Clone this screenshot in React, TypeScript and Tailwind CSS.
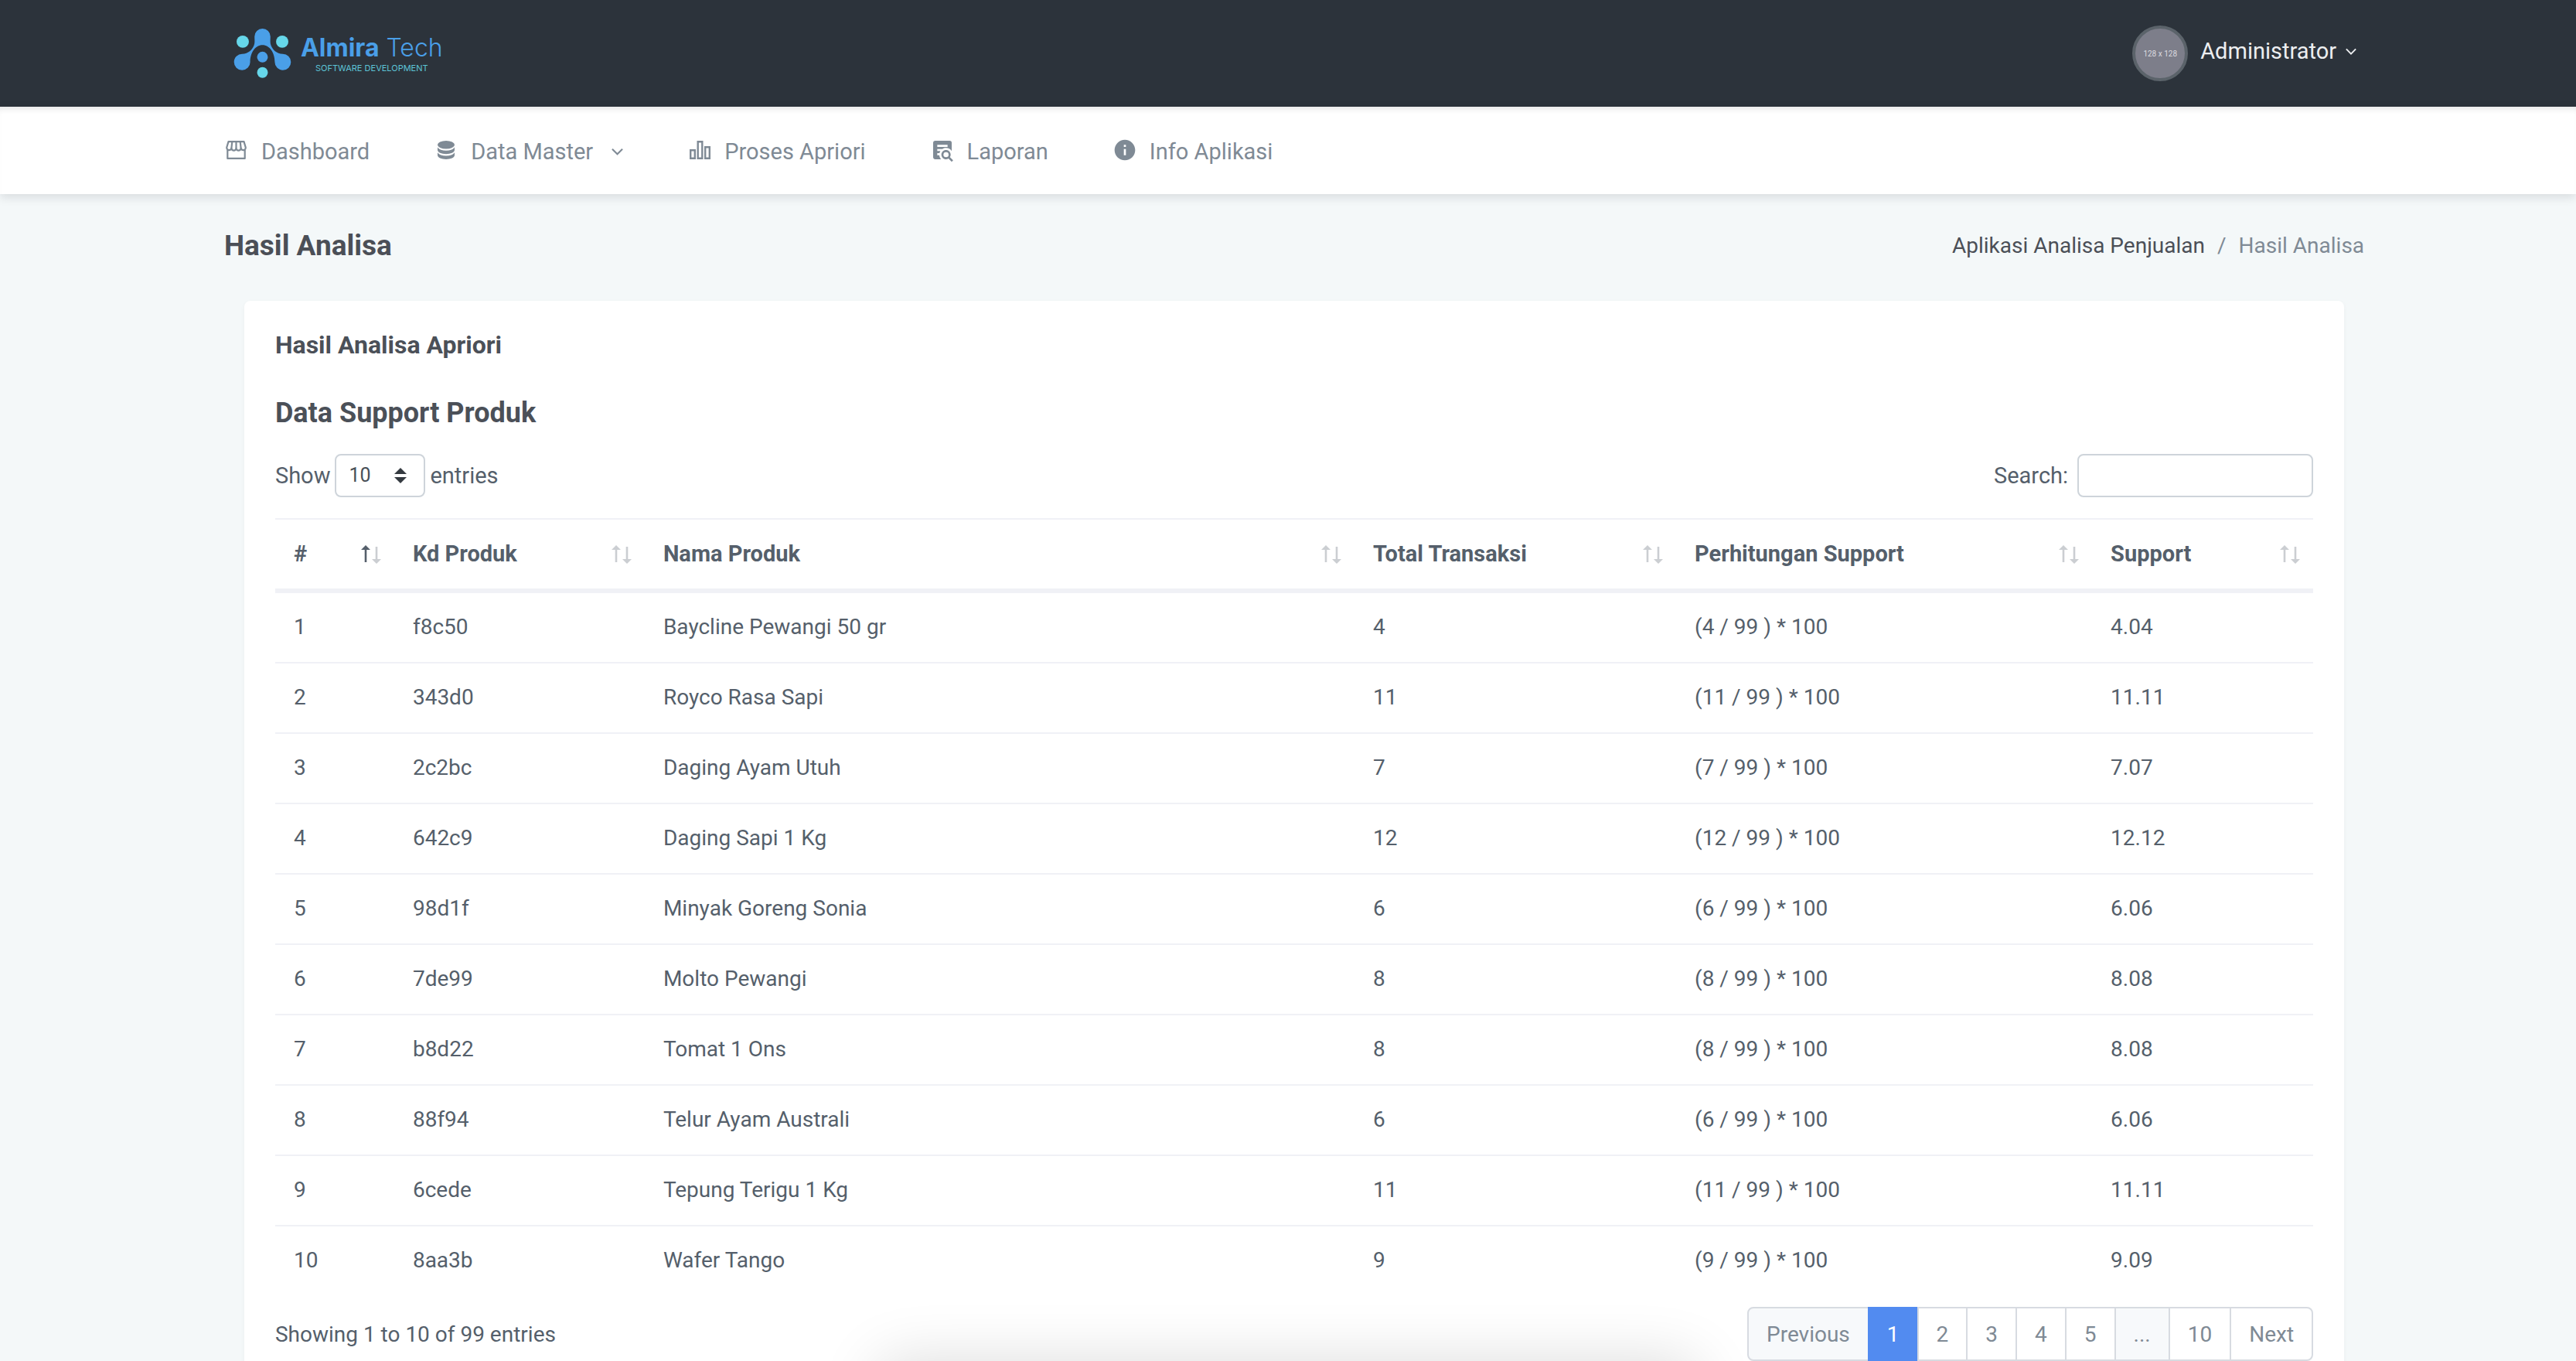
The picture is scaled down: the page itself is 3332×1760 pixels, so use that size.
import { BiSolidInfoCircle } from 'react-icons/bi'

const products = [
  { id: 1, code: 'f8c50', name: 'Baycline Pewangi 50 gr', total: 4, support: '4.04' },
  { id: 2, code: '343d0', name: 'Royco Rasa Sapi', total: 11, support: '11.11' },
  { id: 3, code: '2c2bc', name: 'Daging Ayam Utuh', total: 7, support: '7.07' },
  { id: 4, code: '642c9', name: 'Daging Sapi 1 Kg', total: 12, support: '12.12' },
  { id: 5, code: '98d1f', name: 'Minyak Goreng Sonia', total: 6, support: '6.06' },
  { id: 6, code: '7de99', name: 'Molto Pewangi', total: 8, support: '8.08' },
  { id: 7, code: 'b8d22', name: 'Tomat 1 Ons', total: 8, support: '8.08' },
  { id: 8, code: '88f94', name: 'Telur Ayam Australi', total: 6, support: '6.06' },
  { id: 9, code: '6cede', name: 'Tepung Terigu 1 Kg', total: 11, support: '11.11' },
  { id: 10, code: '8aa3b', name: 'Wafer Tango', total: 9, support: '9.09' },
]

const columns = [
  { label: '#', width: 'w-[154px]', sorted: true },
  { label: 'Kd Produk', width: 'w-[324px]' },
  { label: 'Nama Produk', width: '' },
  { label: 'Total Transaksi', width: 'w-[416px]' },
  { label: 'Perhitungan Support', width: 'w-[538px]' },
  { label: 'Support', width: 'w-[286px]' },
]

const pages = ['Previous', '1', '2', '3', '4', '5', '...', '10', 'Next']

function Logo() {
  return (
    <a href="#" className="flex items-center gap-3">
      <svg viewBox="98 113 224 193" className="h-16 w-[75px]" aria-hidden="true">
        <g fill="#4a9fe8">
          <path d="M179 144a31 31 0 0 1 62 0c0 12-2 24 2 34 6 16 22 34 46 34a31.500 31.500 0 1 1-31 31c0-36-20-66-48-66s-48 30-48 66a31.500 31.500 0 1 1-31-31c24 0 40-18 46-34 4-10 2-22 2-34z" />
          <circle cx="210" cy="224" r="21" />
        </g>
        <g fill="#66d7ea">
          <circle cx="133" cy="164" r="24" />
          <circle cx="287" cy="164" r="24" />
          <circle cx="210" cy="284" r="21" />
        </g>
      </svg>
      <span className="flex flex-col items-center pt-[2px]">
        <span className="font-['Inter',sans-serif] text-[32px] leading-9 text-[#4a9fe8]">
          <b className="font-bold">Almira</b> <span className="font-light">Tech</span>
        </span>
        <span className="font-['Inter',sans-serif] text-[11px] leading-4 text-[#5cc4d6]">
          SOFTWARE DEVELOPMENT
        </span>
      </span>
    </a>
  )
}

function Chevron({ className }: { className: string }) {
  return (
    <svg viewBox="0 0 16 10" className={className} fill="none" stroke="currentColor" aria-hidden="true">
      <path d="M1 1.5 8 8.5 15 1.5" strokeWidth="2.2" />
    </svg>
  )
}

function StoreIcon() {
  return (
    <svg viewBox="0 0 27 24" className="h-6 w-[27px]" fill="none" stroke="currentColor" strokeWidth="2.2" strokeLinejoin="round" aria-hidden="true">
      <path d="M3.500 1.100h20l2.200 7.400a3.050 3.050 0 0 1-6.100 1 3.050 3.050 0 0 1-6.100 0 3.050 3.050 0 0 1-6.100 0 3.050 3.050 0 0 1-6.100-1z" />
      <path d="M8.300 1.100 7.400 9.500M13.500 1.100v8.400M18.700 1.100l.9 8.400M2.300 12v10.900h22.400V12" />
    </svg>
  )
}

function DataIcon() {
  return (
    <svg viewBox="0 0 22 24" className="h-6 w-[22px]" fill="currentColor" aria-hidden="true">
      <ellipse cx="11" cy="5.200" rx="11" ry="5.200" />
      <path d="M0 8.400c2 3 6 4.300 11 4.300s9-1.300 11-4.300v3.600c0 3-5 5.200-11 5.200S0 15 0 12z" />
      <path d="M0 15.200c2 3 6 4.300 11 4.300s9-1.300 11-4.300v3.600c0 3-5 5.200-11 5.200S0 21.800 0 18.800z" />
    </svg>
  )
}

function BarsIcon() {
  return (
    <svg viewBox="0 0 27 24" className="h-6 w-[27px]" fill="none" stroke="currentColor" strokeWidth="2.4" aria-hidden="true">
      <path d="M1.200 12.200h5.600v10.600H1.200zM10.700 1.200h5.600v21.600h-5.600zM20.200 8.200h5.600v14.600h-5.600z" />
    </svg>
  )
}

function ReportIcon() {
  return (
    <svg viewBox="0 0 24 24" className="size-8" fill="currentColor" aria-hidden="true">
      <path d="M15.500 12c2.500 0 4.500 2 4.500 4.500 0 .88-.25 1.710-.69 2.400L22.390 22 21 23.390l-3.120-3.070c-.69.43-1.510.68-2.380.68-2.500 0-4.500-2-4.500-4.500s2-4.500 4.500-4.500m0 2a2.500 2.500 0 0 0 0 5 2.500 2.500 0 0 0 0-5M7 15v2h2c.14 1.550.8 2.940 1.810 4H5c-1.110 0-2-.9-2-2V5c0-1.110.89-2 2-2h14a2 2 0 0 1 2 2v8.030A6.490 6.490 0 0 0 15.500 10c-1.270 0-2.460.37-3.460 1H7v2h3c-.36.6-.66 1.280-.83 2zm10-6V7H7v2z" />
    </svg>
  )
}

const menu = [
  { label: 'Dashboard', icon: <StoreIcon /> },
  { label: 'Data Master', icon: <DataIcon />, children: true },
  { label: 'Proses Apriori', icon: <BarsIcon /> },
  { label: 'Laporan', icon: <ReportIcon /> },
  { label: 'Info Aplikasi', icon: <BiSolidInfoCircle className="size-8" /> },
]

function SortArrows({ active }: { active?: boolean }) {
  return (
    <svg viewBox="0 0 26 24" className="h-6 w-[26px] shrink-0" aria-hidden="true">
      <path d="M6 0 12 6H7.300v16H4.700V6H0z" fill={active ? '#555f6b' : '#cbced2'} />
      <path d="M20 24 14 18h4.700V2h2.600v16H26z" fill="#cbced2" />
    </svg>
  )
}

function pageClass(label: string) {
  if (label === '1') return 'border-[#528bf0] bg-[#528bf0] text-white'
  if (label === 'Previous' || label === '...') return 'border-[#d7dbe1] bg-[#f7f9fb]'
  return 'border-[#d7dbe1] bg-white'
}

export default function App() {
  return (
    <div className="h-screen overflow-hidden bg-[#f4f8f9] font-['Roboto',sans-serif] text-[28px] leading-[43px] text-[#555f6b]">
      <header className="bg-[#2c333b]">
        <div className="mx-auto flex h-[138px] w-[85%] items-center justify-between pr-[34px] pl-[52px]">
          <Logo />
          <button type="button" className="flex items-center gap-4 text-[29px] text-[#eceef0]">
            <span className="flex size-[72px] items-center justify-center rounded-full border-4 border-[#5b636a] bg-[#7d7e8a] text-[10px] text-[#dcdce0]">
              128 x 128
            </span>
            <span className="flex items-center gap-3 pb-[6px]">
              Administrator
              <Chevron className="h-[9px] w-[14px]" />
            </span>
          </button>
        </div>
      </header>

      <nav className="bg-white shadow-[0_4px_12px_rgba(18,20,30,0.12),inset_0_8px_8px_-6px_rgba(0,0,0,0.12)]">
        <ul className="mx-auto flex h-[113px] w-[85%] items-center gap-[83px] pt-[3px] pl-10 text-[29px] text-[#7f8a95]">
          {menu.map((item) => (
            <li key={item.label}>
              <a href="#" className="flex items-center gap-4">
                <span className="mb-1 flex h-8 w-8 items-center justify-center">{item.icon}</span>
                {item.label}
                {item.children && <Chevron className="ml-2 h-[10px] w-[15px]" />}
              </a>
            </li>
          ))}
        </ul>
      </nav>

      <main className="mx-auto w-[85%] pr-6 pl-10">
        <div className="flex h-[138px] items-center justify-between pb-[6px]">
          <h1 className="text-[37px] font-bold text-[#4b4f57]">Hasil Analisa</h1>
          <ol className="flex items-center gap-4">
            <li>
              <a href="#" className="text-[#4b4f57]">Aplikasi Analisa Penjualan</a>
            </li>
            <li className="text-[#7f8a95]">/</li>
            <li className="text-[#7f8a95]">Hasil Analisa</li>
          </ol>
        </div>

        <section className="mx-[26px] rounded-lg bg-white px-10 pt-[34px] pb-12 shadow-[0_2px_6px_rgba(18,38,63,0.04)]">
          <h2 className="text-[32px] leading-[46px] font-bold text-[#4b5058]">Hasil Analisa Apriori</h2>
          <h3 className="mt-[42px] text-[36px] leading-[46px] font-bold text-[#4b5058]">Data Support Produk</h3>

          <div className="mt-[30px] flex items-center justify-between text-[29px]">
            <label className="flex items-center gap-[6px]">
              Show
              <span className="relative flex">
                <select
                  defaultValue="10"
                  className="h-14 w-[117px] appearance-none rounded-lg border-2 border-[#ced4da] bg-white pl-4 text-[25px] leading-9 text-[#495057]"
                >
                  <option>10</option>
                  <option>25</option>
                  <option>50</option>
                  <option>100</option>
                </select>
                <svg viewBox="0 0 16 20" className="pointer-events-none absolute top-[18px] right-6 h-5 w-4" fill="#343a40" aria-hidden="true">
                  <path d="M8 0 16 8H0zM8 20 0 12h16z" />
                </svg>
              </span>
              entries
            </label>
            <label className="flex items-center gap-3">
              Search:
              <input type="search" className="h-14 w-[305px] rounded-lg border-2 border-[#ced4da] bg-white px-4" />
            </label>
          </div>

          <table className="mt-[27px] w-full table-fixed border-separate border-spacing-0 text-left">
            <thead className="text-[29px]">
              <tr>
                {columns.map((c) => (
                  <th key={c.label} className={`h-[97px] border-t-2 border-b-6 border-[#f0f1f6] pr-[17px] pl-6 font-bold ${c.width}`}>
                    <span className="flex items-center justify-between">
                      {c.label}
                      <SortArrows active={c.sorted} />
                    </span>
                  </th>
                ))}
              </tr>
            </thead>
            <tbody className="[&>tr+tr>td]:border-t-2">
              {products.map((p) => (
                <tr key={p.id}>
                  {[p.id, p.code, p.name, p.total, `(${p.total} / 99 ) * 100`, p.support].map((cell, i) => (
                    <td key={i} className="border-[#f0f1f6] px-6 pt-[22px] pb-6">{cell}</td>
                  ))}
                </tr>
              ))}
            </tbody>
          </table>

          <div className="mt-[15px] flex items-center justify-between">
            <p>Showing 1 to 10 of 99 entries</p>
            <div className="flex text-[#7f8a95]">
              {pages.map((label) => (
                <button
                  key={label}
                  type="button"
                  disabled={label === 'Previous' || label === '...'}
                  className={`-ml-[2px] h-[70px] border-2 px-[23px] first:ml-0 first:rounded-l-lg last:rounded-r-lg ${pageClass(label)}`}
                >
                  {label}
                </button>
              ))}
            </div>
          </div>
        </section>
      </main>

      {/* soft shadow rising from below the window edge */}
      <div className="pointer-events-none fixed top-full left-1/2 h-40 w-[1060px] -translate-x-1/2 rounded-3xl shadow-[0_0_80px_rgba(0,0,0,0.14)]" />
    </div>
  )
}
